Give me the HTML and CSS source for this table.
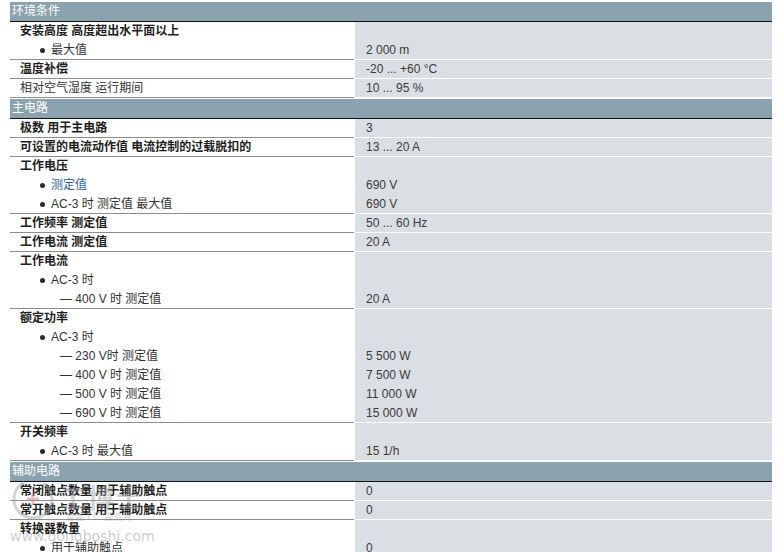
FILE: index.html
```html
<!DOCTYPE html>
<html lang="zh">
<head>
<meta charset="utf-8">
<title>技术数据</title>
<link rel="stylesheet" href="styles.css">
</head>
<body>
<div class="sheet">
  <section class="group">
    <div class="group-head">环境条件</div>
    <div class="row">
      <div class="label"><div class="l b">安装高度 高度超出水平面以上</div><div class="l bul"><i class="dot"></i>最大值</div></div>
      <div class="value"><div class="l"></div><div class="l">2 000 m</div></div>
    </div>
    <div class="row">
      <div class="label"><div class="l b">温度补偿</div></div>
      <div class="value"><div class="l">-20 ... +60 °C</div></div>
    </div>
    <div class="row">
      <div class="label"><div class="l">相对空气湿度 运行期间</div></div>
      <div class="value"><div class="l">10 ... 95 %</div></div>
    </div>
  </section>

  <section class="group">
    <div class="group-head">主电路</div>
    <div class="row">
      <div class="label"><div class="l b">极数 用于主电路</div></div>
      <div class="value"><div class="l">3</div></div>
    </div>
    <div class="row">
      <div class="label"><div class="l b">可设置的电流动作值 电流控制的过载脱扣的</div></div>
      <div class="value"><div class="l">13 ... 20 A</div></div>
    </div>
    <div class="row">
      <div class="label">
        <div class="l b">工作电压</div>
        <div class="l bul"><i class="dot"></i><span class="link">测定值</span></div>
        <div class="l bul"><i class="dot"></i>AC-3 时 测定值 最大值</div>
      </div>
      <div class="value"><div class="l"></div><div class="l">690 V</div><div class="l">690 V</div></div>
    </div>
    <div class="row">
      <div class="label"><div class="l b">工作频率 测定值</div></div>
      <div class="value"><div class="l">50 ... 60 Hz</div></div>
    </div>
    <div class="row">
      <div class="label"><div class="l b">工作电流 测定值</div></div>
      <div class="value"><div class="l">20 A</div></div>
    </div>
    <div class="row">
      <div class="label">
        <div class="l b">工作电流</div>
        <div class="l bul"><i class="dot"></i>AC-3 时</div>
        <div class="l dash">— 400 V 时 测定值</div>
      </div>
      <div class="value"><div class="l"></div><div class="l"></div><div class="l">20 A</div></div>
    </div>
    <div class="row">
      <div class="label">
        <div class="l b">额定功率</div>
        <div class="l bul"><i class="dot"></i>AC-3 时</div>
        <div class="l dash">— 230 V时 测定值</div>
        <div class="l dash">— 400 V 时 测定值</div>
        <div class="l dash">— 500 V 时 测定值</div>
        <div class="l dash">— 690 V 时 测定值</div>
      </div>
      <div class="value">
        <div class="l"></div><div class="l"></div>
        <div class="l">5 500 W</div>
        <div class="l">7 500 W</div>
        <div class="l">11 000 W</div>
        <div class="l">15 000 W</div>
      </div>
    </div>
    <div class="row">
      <div class="label">
        <div class="l b">开关频率</div>
        <div class="l bul"><i class="dot"></i>AC-3 时 最大值</div>
      </div>
      <div class="value"><div class="l"></div><div class="l">15 1/h</div></div>
    </div>
  </section>

  <section class="group">
    <div class="group-head">辅助电路</div>
    <div class="row">
      <div class="label"><div class="l b">常闭触点数量 用于辅助触点</div></div>
      <div class="value"><div class="l">0</div></div>
    </div>
    <div class="row">
      <div class="label"><div class="l b">常开触点数量 用于辅助触点</div></div>
      <div class="value"><div class="l">0</div></div>
    </div>
    <div class="row">
      <div class="label">
        <div class="l b">转换器数量</div>
        <div class="l bul"><i class="dot"></i>用于辅助触点</div>
      </div>
      <div class="value"><div class="l"></div><div class="l">0</div></div>
    </div>
  </section>
</div>

<div class="watermark" aria-hidden="true">
  <svg class="wm-logo" width="46" height="46" viewBox="0 0 46 46">
    <circle cx="23" cy="23" r="19" fill="none" stroke="#9aa0a6" stroke-width="3" stroke-dasharray="80 20"/>
    <path d="M17 23h12M23 17v12" stroke="#d07070" stroke-width="3"/>
  </svg>
  <span class="wm-big">工博士</span>
  <span class="wm-small">智能工厂 服务商</span>
  <span class="wm-url">www.gongboshi.com</span>
</div>
</body>
</html>
```

FILE: styles.css
```css
html, body {
  margin: 0;
  padding: 0;
  background: #ffffff;
}

body {
  font-family: "Liberation Sans", Arial, "Noto Sans CJK SC", sans-serif;
  font-size: 12px;
  color: #333333;
  overflow: hidden;
}

.sheet {
  width: 762px;
  margin-left: 10px;
  padding-top: 1px;
}

.group {
  margin-top: 1px;
}

.group-head {
  height: 19px;
  line-height: 19px;
  padding-left: 2px;
  background: #8ba3ae;
  color: #ffffff;
  border-bottom: 1px solid #111111;
}

.row {
  display: grid;
  grid-template-columns: 344px 417px;
  column-gap: 1px;
}

.label {
  box-shadow: inset 0 -1px 0 #8d8d8d;
  padding-left: 10px;
}

.value {
  background: #dadfe3;
  box-shadow: inset 0 -1px 0 #ffffff;
  padding-left: 11px;
  color: #3a3a3a;
}

.l {
  height: 19px;
  line-height: 19px;
  white-space: nowrap;
}

.b {
  font-weight: bold;
  color: #1e1e1e;
}

.bul {
  padding-left: 20px;
  display: flex;
  align-items: center;
}

.dot {
  display: inline-block;
  width: 5px;
  height: 5px;
  border-radius: 50%;
  background: #2a2a2a;
  margin-right: 6px;
}

.dash {
  padding-left: 40px;
}

.link {
  color: #2f5fa6;
}

.watermark {
  position: absolute;
  left: 8px;
  top: 470px;
  width: 140px;
  height: 82px;
  pointer-events: none;
  opacity: 0.45;
}

.wm-logo {
  position: absolute;
  left: 2px;
  top: 6px;
}

.wm-big {
  position: absolute;
  left: 52px;
  top: 8px;
  font-size: 26px;
  font-weight: bold;
  color: #9aa0a6;
  letter-spacing: 2px;
}

.wm-small {
  position: absolute;
  left: 58px;
  top: 40px;
  font-size: 9px;
  color: #8f959b;
}

.wm-url {
  position: absolute;
  left: 2px;
  top: 58px;
  font-family: "DejaVu Sans", sans-serif;
  font-size: 14px;
  color: #8f959b;
}
```
